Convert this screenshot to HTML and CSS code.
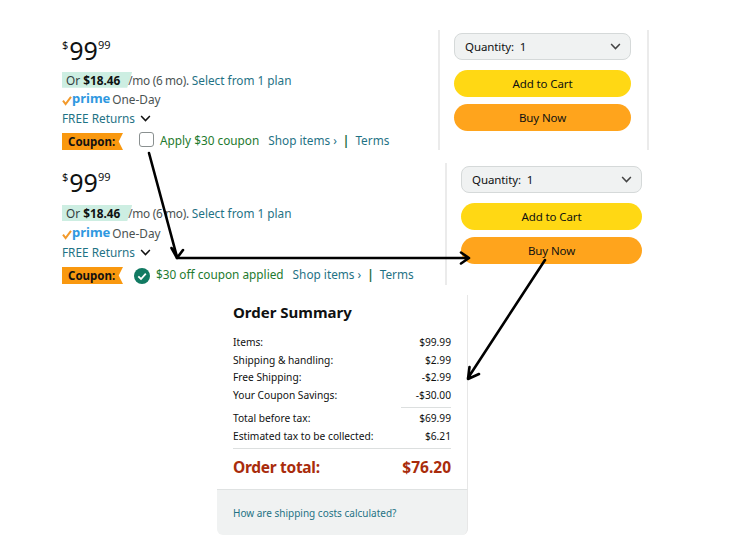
FILE: index.html
```html
<!DOCTYPE html>
<html lang="en">
<head>
<meta charset="utf-8">
<title>Coupon checkout flow</title>
<link rel="stylesheet" href="styles.css">
</head>
<body>
<main class="page">
  <section class="offer offer-a">
    <div class="details">
      <div class="price"><sup>$</sup><span class="whole">99</span><sup class="cents">99</sup></div>
      <div class="line plan"><span class="or">Or <b>$18.46</b></span><span class="mo">/mo (6 mo).</span> <a>Select from 1 plan</a></div>
      <div class="line prime"><svg class="check" viewBox="0 0 10 10"><path d="M1 5.2 3.6 8.6 9 1.4" /></svg><span class="prime-word">prime</span> <span class="oneday">One-Day</span></div>
      <div class="line returns"><a>FREE Returns</a><svg class="chev" viewBox="0 0 12 8"><path d="M1 1.2 6 6.4 11 1.2" /></svg></div>
      <div class="coupon">
        <span class="badge">Coupon:</span>
        <span class="box"></span>
        <span class="green">Apply $30 coupon</span>
        <a>Shop items ›</a><span class="green bar">|</span><a>Terms</a>
      </div>
    </div>
    <div class="buy">
      <div class="qty"><span>Quantity:&nbsp; 1</span><svg class="chev small" viewBox="0 0 12 8"><path d="M1 1.2 6 6.4 11 1.2" /></svg></div>
      <div class="btn cart">Add to Cart</div>
      <div class="btn now">Buy Now</div>
    </div>
  </section>

  <section class="offer offer-b">
    <div class="details">
      <div class="price"><sup>$</sup><span class="whole">99</span><sup class="cents">99</sup></div>
      <div class="line plan"><span class="or">Or <b>$18.46</b></span><span class="mo">/mo (6 mo).</span> <a>Select from 1 plan</a></div>
      <div class="line prime"><svg class="check" viewBox="0 0 10 10"><path d="M1 5.2 3.6 8.6 9 1.4" /></svg><span class="prime-word">prime</span> <span class="oneday">One-Day</span></div>
      <div class="line returns"><a>FREE Returns</a><svg class="chev" viewBox="0 0 12 8"><path d="M1 1.2 6 6.4 11 1.2" /></svg></div>
      <div class="coupon">
        <span class="badge">Coupon:</span>
        <svg class="ok" viewBox="0 0 16 16"><circle cx="8" cy="8" r="8" /><path d="M4.3 8.3 7 11 11.8 5.6" /></svg>
        <span class="green">$30 off coupon applied</span>
        <a>Shop items ›</a><span class="green bar">|</span><a>Terms</a>
      </div>
    </div>
    <div class="buy">
      <div class="qty"><span>Quantity:&nbsp; 1</span><svg class="chev small" viewBox="0 0 12 8"><path d="M1 1.2 6 6.4 11 1.2" /></svg></div>
      <div class="btn cart">Add to Cart</div>
      <div class="btn now">Buy Now</div>
    </div>
  </section>

  <section class="summary">
    <div class="summary-body">
      <h2>Order Summary</h2>
      <div class="rows">
        <div class="row"><span>Items:</span><span>$99.99</span></div>
        <div class="row"><span>Shipping &amp; handling:</span><span>$2.99</span></div>
        <div class="row"><span>Free Shipping:</span><span>-$2.99</span></div>
        <div class="row"><span>Your Coupon Savings:</span><span>-$30.00</span></div>
        <div class="rule short"></div>
        <div class="row"><span>Total before tax:</span><span>$69.99</span></div>
        <div class="row"><span>Estimated tax to be collected:</span><span>$6.21</span></div>
        <div class="rule"></div>
      </div>
      <div class="total"><span class="total-label">Order total:</span><span>$76.20</span></div>
    </div>
    <div class="summary-foot"><a>How are shipping costs calculated?</a></div>
  </section>

  <svg class="arrows" viewBox="0 0 738 554">
    <path d="M149 153 177 257M171.500 248 177 258 183 250" />
    <path d="M177 258H468M461 252.500 469 258 461 263.500" />
    <path d="M545 260 468 378M469.500 367 468 379 479 374" />
  </svg>
</main>
</body>
</html>
```

FILE: styles.css
```css
* { box-sizing: border-box; }
html, body { margin: 0; background: #fff; }
body { font-family: "Noto Sans", "Open Sans", sans-serif; color: #1a1f1f; }
a { color: #1f7285; }

.page { position: relative; width: 738px; height: 554px; padding-top: 30px; overflow: hidden; }

.offer { display: flex; margin-left: 62px; }
.offer-a { height: 120px; }
.offer-b { height: 122px; margin-top: 13px; }

.details { flex: none; display: flex; flex-direction: column; font-size: 11.800px; }
.offer-a .details { width: 376px; }
.offer-b .details { width: 383px; }

.price { display: flex; align-items: flex-start; height: 24px; margin-top: 8px; line-height: 24px; color: #0f1111; }
.price sup { font-size: 11px; line-height: 14px; vertical-align: baseline; }
.price .whole { font-size: 25px; line-height: 24px; margin-left: 1px; }
.offer-b .price { margin-top: 7px; }

.line { display: flex; align-items: center; gap: 3px; white-space: pre; }
.plan { height: 18px; margin-top: 9px; }
.offer-b .plan { margin-top: 10px; }
.or { display: block; height: 16px; line-height: 16px; padding: 0 12px 0 4px; margin-right: -7px; background: #cdeee2; clip-path: polygon(0 0, 100% 0, calc(100% - 5px) 100%, 0 100%); color: #33403f; }
.or b { color: #0f1111; }
.mo { position: relative; color: #4a5252; letter-spacing: -0.300px; }

.prime { height: 20px; margin-top: 1px; gap: 0; }
.check { width: 10px; height: 11px; fill: none; stroke: #f39a2b; stroke-width: 2; margin-top: 2px; }
.prime-word { font-weight: 700; font-size: 13px; color: #2f98e0; line-height: 16px; margin: -3px 2px 0 0; }
.oneday { color: #4a5252; }

.returns { height: 18px; gap: 5px; }
.chev { width: 11px; height: 7px; fill: none; stroke: #111; stroke-width: 1.700; }
.chev.small { stroke: #444; }

.coupon { display: flex; align-items: center; height: 20px; margin-top: 3px; white-space: pre; }
.badge { flex: none; width: 61px; height: 17px; line-height: 17px; padding-left: 6px; margin-top: 3px; font-weight: 700; font-size: 11.500px; color: #111; background: #f9980f;
  clip-path: polygon(0 0, 100% 0, 93% 50%, 100% 100%, 0 100%); }
.box { flex: none; width: 15px; height: 15px; margin: 0 6px 0 16px; border: 1.500px solid #8a9090; border-radius: 3px; background: #fff; }
.ok { flex: none; width: 16px; height: 16px; margin: 3px 6px 0 11px; }
.ok circle { fill: #117a62; }
.ok path { fill: none; stroke: #fff; stroke-width: 1.800; }
.green { color: #1e7a2e; margin-right: 9px; }
.bar { margin: 0 6px; font-weight: 700; color: #1a6b3c; }

.buy { flex: none; display: flex; flex-direction: column; border-left: 2px solid #ebebeb; font-size: 11.500px; letter-spacing: -0.100px; color: #0f1111; }
.offer-a .buy { width: 211px; padding: 3px 16px 0 14px; border-right: 2px solid #ebebeb; }
.offer-b .buy { width: 197px; padding: 3px 0 0 14px; }
.qty { display: flex; align-items: center; justify-content: space-between; height: 27px; padding: 0 9px 0 10px; border: 1px solid #d5d9d9; border-radius: 8px; background: #f0f2f2; }
.btn { height: 27px; line-height: 27px; text-align: center; border-radius: 14px; }
.cart { background: #ffd814; margin-top: 10px; }
.now { background: #ffa41c; margin-top: 7px; }

.summary { margin: 10px 0 0 217px; width: 251px; height: 240px; display: flex; flex-direction: column; }
.summary-body { flex: 1; padding: 0 16px; border-right: 1px solid #e7e7e7; }
.summary h2 { margin: 7px 0 0; font-size: 15px; line-height: 20px; font-weight: 700; color: #0f1111; }
.rows { margin-top: 12px; font-size: 10.200px; }
.row { display: flex; justify-content: space-between; height: 17.500px; line-height: 17.500px; color: #0f1111; }
.rule { height: 1px; margin: 3px 0 2px; background: #dcdfdf; }
.rule.short { width: 50px; margin: 3px 0 2px auto; }
.total { display: flex; justify-content: space-between; margin-top: 7px; font-size: 15.500px; line-height: 22px; font-weight: 700; color: #a92c0c; }
.total-label { letter-spacing: -0.300px; }
.summary-foot { flex: none; height: 46px; padding: 0 16px; display: flex; align-items: center; font-size: 10px; background: #f0f2f2; border-top: 1px solid #dfe2e2; border-right: 1px solid #e7e7e7; border-radius: 0 0 6px 6px; }

.arrows { position: absolute; left: 0; top: 0; width: 738px; height: 554px; pointer-events: none; }
.arrows path { fill: none; stroke: #000; stroke-width: 2.600; stroke-linecap: round; stroke-linejoin: round; }
```
